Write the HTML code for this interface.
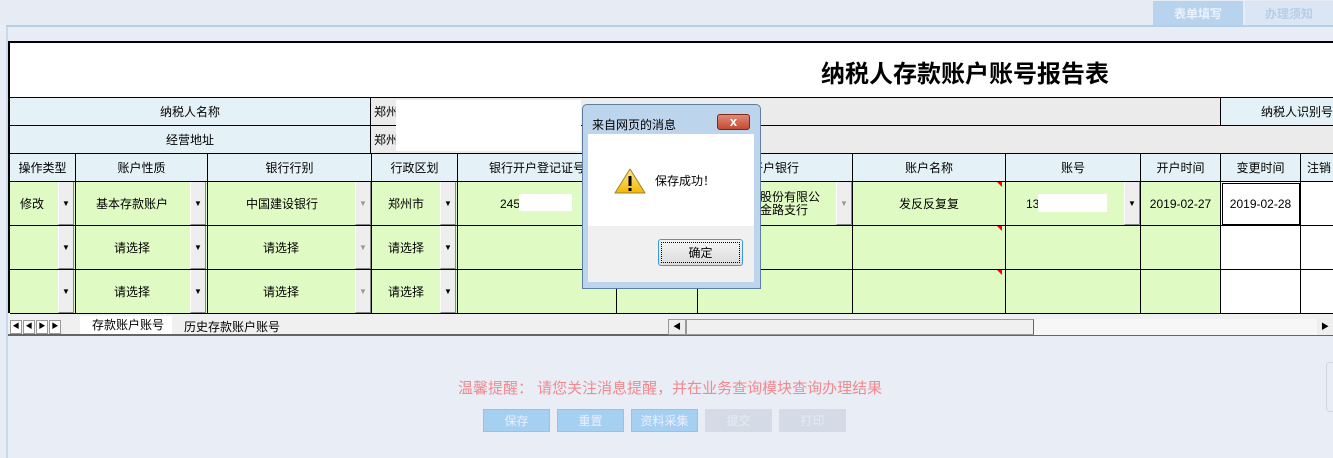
<!DOCTYPE html>
<html><head><meta charset="utf-8"><style>
*{margin:0;padding:0;box-sizing:border-box}
body{width:1333px;height:458px;overflow:hidden;background:#e9edf5;font-family:"Liberation Sans","Noto Sans CJK SC",sans-serif;font-size:12px;color:#000;position:relative}
.a{position:absolute}
.c{position:absolute;display:flex;align-items:center;justify-content:center;border-right:1px solid #000;border-bottom:1px solid #000;font-size:12px;white-space:nowrap;overflow:hidden}
.h{background:#e4f2f7}
.g{background:#e0fac4}
.w{background:#fff}
.dd{position:absolute;width:16px;background:#eee;border-left:1px solid #fff;border-right:1px solid #888;border-bottom:1px solid #888;display:flex;align-items:center;justify-content:center;font-size:8px}
.btn{position:absolute;top:409px;height:23px;width:67px;display:flex;align-items:center;justify-content:center;font-size:12px;color:#eef;}
</style></head><body>
<div class="a" style="left:0;top:0;width:1333px;height:25px;background:#e6ebf4"></div>
<div class="a" style="left:1153px;top:1px;width:90px;height:25px;background:#b8d3ee;color:#eaf2fb;font-weight:bold;display:flex;align-items:center;justify-content:center">表单填写</div>
<div class="a" style="left:1245px;top:1px;width:88px;height:25px;background:#dbe6f4;color:#b8cde6;font-weight:bold;display:flex;align-items:center;justify-content:center">办理须知</div>
<div class="a" style="left:6px;top:25px;width:1327px;height:2px;background:#b5cfe9"></div>
<div class="a" style="left:6px;top:27px;width:2px;height:431px;background:#c8daee"></div>
<div class="a" style="left:8px;top:27px;width:1325px;height:14px;background:#e8edf5"></div>
<div class="a" style="left:8px;top:41px;width:1325px;height:272px;background:#fff;border-top:2px solid #000;border-left:2px solid #000"></div>
<div class="a" style="left:700px;top:54px;width:530px;text-align:center;font-size:24px;font-weight:bold">纳税人存款账户账号报告表</div>
<!-- info rows -->
<div class="a" style="left:9px;top:97px;width:1324px;height:1px;background:#000"></div>
<div class="c h" style="left:10px;top:98px;width:361px;height:28px">纳税人名称</div>
<div class="c" style="left:371px;top:98px;width:850px;height:28px;background:#ebebeb;justify-content:flex-start;padding-left:3px">郑州</div>
<div class="c h" style="left:1221px;top:98px;width:112px;height:28px;justify-content:flex-end;border-right:0">纳税人识别号</div>
<div class="c h" style="left:10px;top:126px;width:361px;height:28px">经营地址</div>
<div class="c" style="left:371px;top:126px;width:962px;height:28px;background:#ebebeb;justify-content:flex-start;border-right:0;padding-left:3px">郑州</div>
<div class="a" style="left:396px;top:100px;width:185px;height:51px;background:#fff"></div>
<!-- header -->
<div class="c h" style="left:10px;top:154px;width:66px;height:28px">操作类型</div>
<div class="c h" style="left:76px;top:154px;width:132px;height:28px">账户性质</div>
<div class="c h" style="left:208px;top:154px;width:164px;height:28px">银行行别</div>
<div class="c h" style="left:372px;top:154px;width:86px;height:28px">行政区划</div>
<div class="c h" style="left:458px;top:154px;width:159px;height:28px">银行开户登记证号</div>
<div class="c h" style="left:617px;top:154px;width:81px;height:28px"></div>
<div class="c h" style="left:698px;top:154px;width:155px;height:28px">开户银行</div>
<div class="c h" style="left:853px;top:154px;width:153px;height:28px">账户名称</div>
<div class="c h" style="left:1006px;top:154px;width:135px;height:28px">账号</div>
<div class="c h" style="left:1141px;top:154px;width:80px;height:28px">开户时间</div>
<div class="c h" style="left:1221px;top:154px;width:80px;height:28px">变更时间</div>
<div class="c h" style="left:1301px;top:154px;width:32px;height:28px;justify-content:flex-start;padding-left:6px;border-right:0">注销</div>
<!-- data rows -->
<div class="c g" style="left:10px;top:182px;width:66px;height:44px;justify-content:flex-start;padding-left:10px">修改</div>
<div class="c g" style="left:76px;top:182px;width:132px;height:44px;justify-content:flex-start;padding-left:20px">基本存款账户</div>
<div class="c g" style="left:208px;top:182px;width:164px;height:44px;justify-content:flex-start;padding-left:38px">中国建设银行</div>
<div class="c g" style="left:372px;top:182px;width:86px;height:44px;justify-content:flex-start;padding-left:16px">郑州市</div>
<div class="c g" style="left:458px;top:182px;width:159px;height:44px;justify-content:flex-start;padding-left:42px">245</div>
<div class="a" style="left:519px;top:194px;width:53px;height:17px;background:#fff"></div>
<div class="c g" style="left:617px;top:182px;width:81px;height:44px"></div>
<div class="c g" style="left:698px;top:182px;width:155px;height:44px;justify-content:flex-start;align-items:center;line-height:13px;white-space:normal"><div style="margin-left:50px;width:92px;overflow:hidden;white-space:nowrap">行股份有限公<br>路金路支行</div></div>
<div class="c g" style="left:853px;top:182px;width:153px;height:44px">发反反复复</div>
<div class="c g" style="left:1006px;top:182px;width:135px;height:44px;justify-content:flex-start;padding-left:20px">13</div>
<div class="a" style="left:1038px;top:194px;width:69px;height:18px;background:#fff"></div>
<div class="c g" style="left:1141px;top:182px;width:80px;height:44px">2019-02-27</div>
<div class="c w" style="left:1221px;top:182px;width:80px;height:44px;outline:1px solid #000;outline-offset:-2px">2019-02-28</div>
<div class="c w" style="left:1301px;top:182px;width:32px;height:44px;border-right:0"></div>

<div class="c g" style="left:10px;top:226px;width:66px;height:44px"></div>
<div class="c g" style="left:76px;top:226px;width:132px;height:44px;justify-content:flex-start;padding-left:38px">请选择</div>
<div class="c g" style="left:208px;top:226px;width:164px;height:44px;justify-content:flex-start;padding-left:55px">请选择</div>
<div class="c g" style="left:372px;top:226px;width:86px;height:44px;justify-content:flex-start;padding-left:16px">请选择</div>
<div class="c g" style="left:458px;top:226px;width:159px;height:44px"></div>
<div class="c g" style="left:617px;top:226px;width:81px;height:44px"></div>
<div class="c g" style="left:698px;top:226px;width:155px;height:44px"></div>
<div class="c g" style="left:853px;top:226px;width:153px;height:44px"></div>
<div class="c g" style="left:1006px;top:226px;width:135px;height:44px"></div>
<div class="c g" style="left:1141px;top:226px;width:80px;height:44px"></div>
<div class="c w" style="left:1221px;top:226px;width:80px;height:44px"></div>
<div class="c w" style="left:1301px;top:226px;width:32px;height:44px;border-right:0"></div>

<div class="c g" style="left:10px;top:270px;width:66px;height:44px"></div>
<div class="c g" style="left:76px;top:270px;width:132px;height:44px;justify-content:flex-start;padding-left:38px">请选择</div>
<div class="c g" style="left:208px;top:270px;width:164px;height:44px;justify-content:flex-start;padding-left:55px">请选择</div>
<div class="c g" style="left:372px;top:270px;width:86px;height:44px;justify-content:flex-start;padding-left:16px">请选择</div>
<div class="c g" style="left:458px;top:270px;width:159px;height:44px"></div>
<div class="c g" style="left:617px;top:270px;width:81px;height:44px"></div>
<div class="c g" style="left:698px;top:270px;width:155px;height:44px"></div>
<div class="c g" style="left:853px;top:270px;width:153px;height:44px"></div>
<div class="c g" style="left:1006px;top:270px;width:135px;height:44px"></div>
<div class="c g" style="left:1141px;top:270px;width:80px;height:44px"></div>
<div class="c w" style="left:1221px;top:270px;width:80px;height:44px"></div>
<div class="c w" style="left:1301px;top:270px;width:32px;height:44px;border-right:0"></div>

<!-- dropdown buttons -->
<div class="dd" style="left:58px;top:182px;height:43px">▼</div>
<div class="dd" style="left:190px;top:182px;height:43px">▼</div>
<div class="dd" style="left:355px;top:182px;height:43px;color:#999">▼</div>
<div class="dd" style="left:440px;top:182px;height:43px">▼</div>
<div class="dd" style="left:836px;top:182px;height:43px;color:#999">▼</div>
<div class="dd" style="left:1124px;top:182px;height:43px">▼</div>
<div class="dd" style="left:58px;top:226px;height:43px">▼</div>
<div class="dd" style="left:190px;top:226px;height:43px">▼</div>
<div class="dd" style="left:355px;top:226px;height:43px;color:#999">▼</div>
<div class="dd" style="left:440px;top:226px;height:43px">▼</div>
<div class="dd" style="left:58px;top:270px;height:43px">▼</div>
<div class="dd" style="left:190px;top:270px;height:43px">▼</div>
<div class="dd" style="left:355px;top:270px;height:43px;color:#999">▼</div>
<div class="dd" style="left:440px;top:270px;height:43px">▼</div>
<div class="a" style="left:997px;top:182px;width:0;height:0;border-top:5px solid red;border-left:5px solid transparent"></div>
<div class="a" style="left:997px;top:226px;width:0;height:0;border-top:5px solid red;border-left:5px solid transparent"></div>
<div class="a" style="left:997px;top:270px;width:0;height:0;border-top:5px solid red;border-left:5px solid transparent"></div>
<!-- sheet tab bar -->
<div class="a" style="left:8px;top:314px;width:1325px;height:22px;background:#f0f0f0;border-bottom:2px solid #666"></div>
<div class="a" style="left:10px;top:320px;width:12px;height:14px;border:1px solid #999;background:#fff;font-size:7px;text-align:center;line-height:12px">◀</div>
<div class="a" style="left:23px;top:320px;width:12px;height:14px;border:1px solid #999;background:#fff;font-size:7px;text-align:center;line-height:12px">◀</div>
<div class="a" style="left:36px;top:320px;width:12px;height:14px;border:1px solid #999;background:#fff;font-size:7px;text-align:center;line-height:12px">▶</div>
<div class="a" style="left:49px;top:320px;width:12px;height:14px;border:1px solid #999;background:#fff;font-size:7px;text-align:center;line-height:12px">▶</div>
<div class="a" style="left:80px;top:316px;width:92px;height:18px;background:#fff;font-size:12px;padding-left:12px;line-height:18px">存款账户账号</div>
<div class="a" style="left:184px;top:318px;font-size:12px">历史存款账户账号</div>
<div class="a" style="left:668px;top:319px;width:18px;height:16px;background:#eee;border:1px solid #999;font-size:8px;text-align:center;line-height:14px">◀</div>
<div class="a" style="left:686px;top:319px;width:348px;height:16px;background:#f0f0f0;border:1px solid #999;border-right-color:#666"></div>
<div class="a" style="left:1034px;top:319px;width:283px;height:16px;background:#f7f7f7"></div>
<div class="a" style="left:1317px;top:319px;width:16px;height:16px;background:#eee;font-size:8px;text-align:center;line-height:16px">▶</div>
<!-- footer -->
<div class="a" style="left:458px;top:377px;font-size:15px;color:#f08a8f">温馨提醒： 请您关注消息提醒，并在业务查询模块查询办理结果</div>
<div class="btn" style="left:483px;background:#a6d0f2;border:1px solid #93c2ea">保存</div>
<div class="btn" style="left:557px;background:#a6d0f2;border:1px solid #93c2ea">重置</div>
<div class="btn" style="left:631px;background:#a6d0f2;border:1px solid #93c2ea">资料采集</div>
<div class="btn" style="left:705px;background:#d5dbe6;color:#e6ecf3">提交</div>
<div class="btn" style="left:779px;background:#d5dbe6;color:#e6ecf3">打印</div>
<div class="a" style="left:1326px;top:362px;width:10px;height:50px;border:1px solid #d0d8e4;border-radius:4px"></div>
<!-- dialog -->
<div class="a" style="left:582px;top:104px;width:179px;height:185px;background:#bcd4ec;border:1px solid #5f7fa0;border-radius:5px 5px 0 0"></div>
<div class="a" style="left:592px;top:116px;font-size:12px">来自网页的消息</div>
<div class="a" style="left:717px;top:114px;width:33px;height:16px;background:linear-gradient(#e08a78,#c44a32);border:1px solid #7a2a1a;border-radius:3px;color:#fff;font-weight:bold;text-align:center;line-height:14px;font-size:13px">x</div>
<div class="a" style="left:588px;top:134px;width:166px;height:92px;background:#fff"></div>
<div class="a" style="left:588px;top:226px;width:166px;height:56px;background:#f0f0f0"></div>
<svg class="a" style="left:613px;top:167px" width="34" height="28" viewBox="0 0 34 28"><defs><linearGradient id="y" x1="0" y1="0" x2="0" y2="1"><stop offset="0" stop-color="#ffe98a"/><stop offset="1" stop-color="#f2b800"/></linearGradient></defs><path d="M17 2 L32 26 L2 26 Z" fill="url(#y)" stroke="#a08030" stroke-linejoin="round"/><rect x="15.5" y="9" width="3" height="10" fill="#000"/><rect x="15.5" y="21" width="3" height="3" fill="#000"/></svg>
<div class="a" style="left:655px;top:172px;font-size:12px">保存成功！</div>
<div class="a" style="left:658px;top:239px;width:85px;height:27px;border:1px solid #3c9bd6;border-radius:3px;background:linear-gradient(#f4f4f4,#dcdcdc);outline:1px dotted #000;outline-offset:-4px;display:flex;align-items:center;justify-content:center;font-size:12px">确定</div>
</body></html>
